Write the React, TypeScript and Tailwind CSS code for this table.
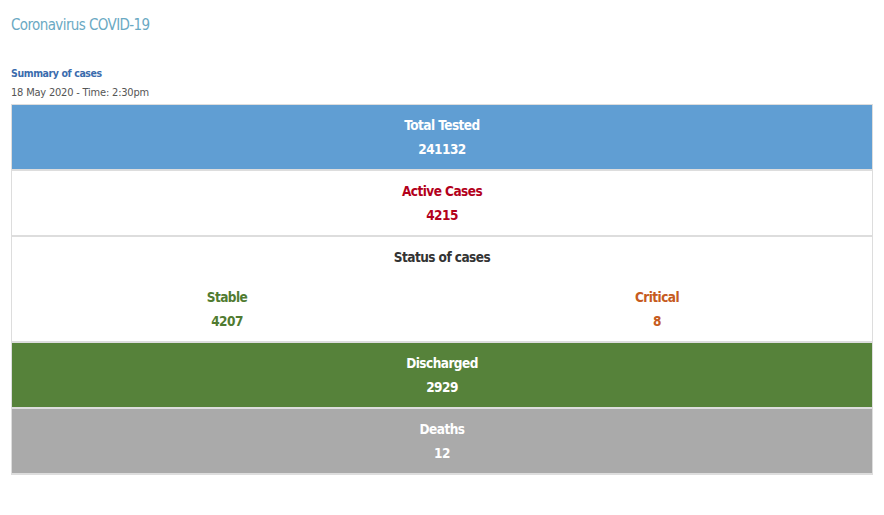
import React from "react";

const font: React.CSSProperties = {
  fontFamily: '"DejaVu Sans Condensed", "Liberation Sans", sans-serif',
};

interface RowProps {
  label: string;
  value: number;
  className: string;
}

const StatRow: React.FC<RowProps> = ({ label, value, className }) => (
  <div className={`border-b-2 border-[#ddd] py-2 text-center text-[13.5px] font-bold leading-6 tracking-[-0.55px] ${className}`}>
    <div>{label}</div>
    <div>{value}</div>
  </div>
);

export default function App() {
  return (
    <div className="min-h-[515px] bg-white px-[11px] pt-[13px]" style={font}>
      {/* Heading */}
      <h1 className="text-[15px] leading-6 tracking-[-0.6px] text-[#6aa9c3]">Coronavirus COVID-19</h1>

      <div className="mt-[26px] leading-5">
        <div className="text-[10.5px] font-bold tracking-[-0.4px] text-[#3a6cad]">Summary of cases</div>
        <div className="text-[11px] tracking-[-0.2px] text-[#555]">18 May 2020 - Time: 2:30pm</div>
      </div>

      {/* Summary table */}
      <div className="mt-px border-x border-t border-[#ddd]">
        <StatRow label="Total Tested" value={241132} className="bg-[#609ed3] text-white" />
        <StatRow label="Active Cases" value={4215} className="bg-white text-[#b3001b]" />

        <div className="border-b-2 border-[#ddd] py-2 text-center text-[13.5px] font-bold leading-6 tracking-[-0.55px]">
          <div className="text-[#333]">Status of cases</div>
          <div className="mt-4 grid grid-cols-2">
            <div className="text-[#507b31]">
              <div>Stable</div>
              <div>4207</div>
            </div>
            <div className="text-[#c65b20]">
              <div>Critical</div>
              <div>8</div>
            </div>
          </div>
        </div>

        <StatRow label="Discharged" value={2929} className="bg-[#56823a] text-white" />
        <StatRow label="Deaths" value={12} className="bg-[#aaaaaa] text-white" />
      </div>
    </div>
  );
}
